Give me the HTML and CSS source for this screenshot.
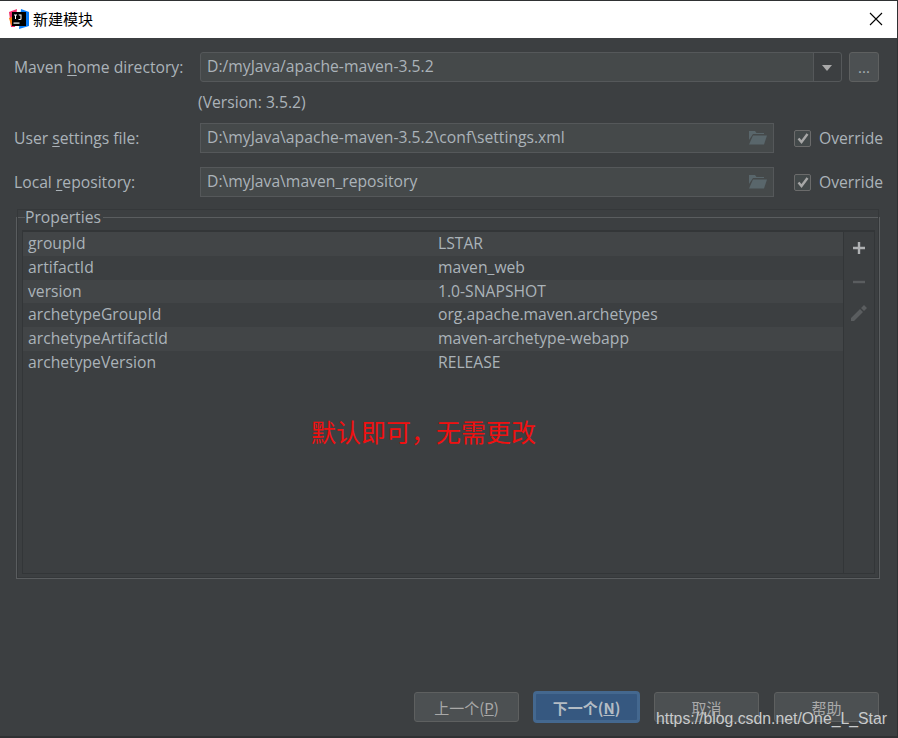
FILE: index.html
```html
<!DOCTYPE html>
<html lang="zh">
<head>
    <meta charset="UTF-8">
    <title>新建模块</title>
    <link rel="stylesheet" href="styles.css">
</head>
<body>
    <div class="dialog">
        <div class="titlebar">
            <svg class="app-icon" width="20" height="20" viewBox="0 0 20 20">
                <path d="M0 3 L8 0 L6 18 L2 18 Z" fill="#f0306e"/>
                <path d="M0 9 L5 7 L5 16 L2 16 Z" fill="#f97a12"/>
                <path d="M12 0 L20 3 L20 17 L10 20 Z" fill="#087cfa"/>
                <rect x="3" y="3" width="14" height="14" fill="#000"/>
                <rect x="4.500" y="13.500" width="6" height="1.200" fill="#fff"/>
                <path d="M5 5.500h3v1H7v3.500H6V6.500H5z M9.500 5.500h3v4.500q0 1-1.500 1h-1.500v-1h1.500q.5 0 .5-.5V6.500h-1.500z" fill="#fff"/>
            </svg>
            <span class="title">新建模块</span>
            <svg class="close" width="14" height="14" viewBox="0 0 14 14">
                <path d="M1 1 L13 13 M13 1 L1 13" stroke="#000" stroke-width="1.100" fill="none"/>
            </svg>
        </div>

        <div class="content">
            <div class="form-row first">
                <label class="form-label">Maven <u>h</u>ome directory:</label>
                <div class="combo">
                    <span class="combo-text">D:/myJava/apache-maven-3.5.2</span>
                    <span class="combo-arrow"></span>
                </div>
                <button class="browse">...</button>
            </div>
            <div class="version">(Version: 3.5.2)</div>
            <div class="form-row">
                <label class="form-label">User <u>s</u>ettings file:</label>
                <div class="path-field">
                    <span>D:\myJava\apache-maven-3.5.2\conf\settings.xml</span>
                    <svg class="folder" width="20" height="16" viewBox="0 0 20 16">
                        <path d="M1 1h6l1.500 2H16v1H5L1 10z" fill="#59666b"/>
                        <path d="M5 5.500h14L16 14.500H1z" fill="#59666b"/>
                    </svg>
                </div>
                <label class="override"><span class="checkbox"><svg width="12" height="11" viewBox="0 0 12 11"><path d="M1.500 5.500 L4.500 9 L10.500 1" stroke="#a7a7a7" stroke-width="2.400" fill="none"/></svg></span>Override</label>
            </div>
            <div class="form-row">
                <label class="form-label">Local <u>r</u>epository:</label>
                <div class="path-field">
                    <span>D:\myJava\maven_repository</span>
                    <svg class="folder" width="20" height="16" viewBox="0 0 20 16">
                        <path d="M1 1h6l1.500 2H16v1H5L1 10z" fill="#59666b"/>
                        <path d="M5 5.500h14L16 14.500H1z" fill="#59666b"/>
                    </svg>
                </div>
                <label class="override"><span class="checkbox"><svg width="12" height="11" viewBox="0 0 12 11"><path d="M1.500 5.500 L4.500 9 L10.500 1" stroke="#a7a7a7" stroke-width="2.400" fill="none"/></svg></span>Override</label>
            </div>

            <fieldset class="properties">
                <legend>Properties</legend>
                <div class="props-panel">
                    <div class="props-table">
                        <div class="prop-row"><span class="prop-name">groupId</span><span>LSTAR</span></div>
                        <div class="prop-row"><span class="prop-name">artifactId</span><span>maven_web</span></div>
                        <div class="prop-row"><span class="prop-name">version</span><span>1.0-SNAPSHOT</span></div>
                        <div class="prop-row"><span class="prop-name">archetypeGroupId</span><span>org.apache.maven.archetypes</span></div>
                        <div class="prop-row"><span class="prop-name">archetypeArtifactId</span><span>maven-archetype-webapp</span></div>
                        <div class="prop-row"><span class="prop-name">archetypeVersion</span><span>RELEASE</span></div>
                    </div>
                    <div class="props-tools">
                        <svg width="16" height="16" viewBox="0 0 16 16"><path d="M8 2v12M2 8h12" stroke="#afb1b3" stroke-width="2.400"/></svg>
                        <svg width="16" height="16" viewBox="0 0 16 16"><path d="M2 8h12" stroke="#5a5d5f" stroke-width="2.400"/></svg>
                        <svg class="tool-edit" width="18" height="18" viewBox="0 0 18 18"><path d="M1 14 L1 17 L4 17 L13 8 L10 5 Z M11 4 L14 7 L17 4 L14 1 Z" fill="#5a5d5f"/></svg>
                    </div>
                </div>
            </fieldset>
        </div>

        <div class="buttons">
            <button class="btn">上一个(<u>P</u>)</button>
            <button class="btn primary">下一个(<u>N</u>)</button>
            <button class="btn">取消</button>
            <button class="btn last">帮助</button>
        </div>

        <div class="note">默认即可，无需更改</div>
        <div class="watermark">https://blog.csdn.net/One_L_Star</div>
    </div>
</body>
</html>
```

FILE: styles.css
```css
* { box-sizing: border-box; }
html, body { margin: 0; padding: 0; }
body { width: 898px; height: 738px; overflow: hidden; background-color: #3c3f41; font-family: "Open Sans", "Noto Sans CJK SC", sans-serif; font-size: 15.7px; color: #abb3b9; }

.dialog { position: relative; width: 898px; height: 738px; border-top: 1px solid #2f3133; border-bottom: 2px solid #2f3133; border-right: 1px solid #2f3133; display: flex; flex-direction: column; }

.titlebar { height: 37px; background-color: #fff; display: flex; align-items: center; padding: 0 14px 2px 9px; color: #000; flex: none; }
.app-icon { margin-right: 4px; }
.title { font-family: "Noto Sans CJK SC", sans-serif; font-size: 15px; flex: 1; }

.content { flex: 1; padding: 14px 18px 0 14px; }

.form-row { display: flex; align-items: center; height: 30px; margin-bottom: 14px; }
.form-label { width: 186px; flex: none; }
.form-label u { text-underline-offset: 2px; }

.combo { width: 642px; height: 30px; flex: none; display: flex; border: 1px solid #55585a; border-radius: 3px; background-color: #45494a; }
.combo-text { flex: 1; padding-left: 6px; line-height: 27px; }
.combo-arrow { width: 28px; border-left: 1px solid #55585a; background-color: #3c3f41; position: relative; border-radius: 0 3px 3px 0; }
.combo-arrow::after { content: ""; position: absolute; left: 8px; top: 12px; border-left: 5.500px solid transparent; border-right: 5.500px solid transparent; border-top: 6px solid #a9a9a9; }

.browse { width: 30px; height: 30px; margin-left: 7px; background-color: #4c5052; border: 1px solid #5e6060; border-radius: 3px; color: #a9b0b6; font-family: inherit; font-size: 15px; padding: 0; }

.version { margin: -14px 0 0 184px; height: 41px; line-height: 41px; }

.path-field { width: 574px; height: 30px; flex: none; display: flex; align-items: center; justify-content: space-between; padding: 0 5px 0 6px; border: 1px solid #55585a; background-color: #45494a; }
.path-field span { margin-top: -2px; }

.override { display: flex; align-items: center; margin-left: 20px; white-space: nowrap; }
.checkbox { width: 17px; height: 17px; margin-right: 8px; border: 1px solid #6b6b6b; border-radius: 2px; background-color: #43494a; display: flex; align-items: center; justify-content: center; }

.properties { width: 864px; height: 371px; margin: -3px 0 0 2px; padding: 0 4px 4px 5px; border: 1px solid #5a5d5f; outline: 1px solid #35383a; outline-offset: -2px; }
.properties legend { padding: 0 2px 0 0; margin-left: 3px; line-height: 18px; height: 18px; }
.props-panel { height: 344px; margin-top: 4px; display: flex; border: 1px solid #333638; border-top-width: 2px; }
.props-table { width: 820px; flex: none; }
.prop-row { height: 23.800px; line-height: 22px; display: flex; padding-left: 5px; }
.prop-row:nth-child(odd) { background-color: #424547; }
.prop-name { width: 410px; flex: none; }
.props-tools { flex: 1; border-left: 1px solid #333638; display: flex; flex-direction: column; align-items: center; gap: 18px; padding-top: 8px; }
.tool-edit { margin-top: -4px; }

.buttons { display: flex; justify-content: flex-end; align-items: center; gap: 14px; padding: 0 18px 13px 0; flex: none; }
.btn { width: 105px; height: 30px; background-color: #4c5052; border: 1px solid #5e6060; border-radius: 3px; color: #a9a9a9; font-family: "Noto Sans CJK SC", sans-serif; font-size: 15px; padding: 0; }
.btn.last { margin-left: 1px; }
.btn.primary { width: 107px; height: 32px; background-color: #365880; border: 3px solid #44688f; border-radius: 4px; color: #b4bcc4; font-weight: bold; }

.note { position: absolute; left: 311px; top: 414px; font-family: "Noto Sans CJK SC", sans-serif; font-size: 25px; line-height: 33px; color: #f01010; white-space: nowrap; }
.watermark { position: absolute; right: 10px; top: 708px; font-family: "Liberation Sans", sans-serif; font-size: 15.800px; line-height: 20px; color: #c9cbcc; white-space: nowrap; }
```
